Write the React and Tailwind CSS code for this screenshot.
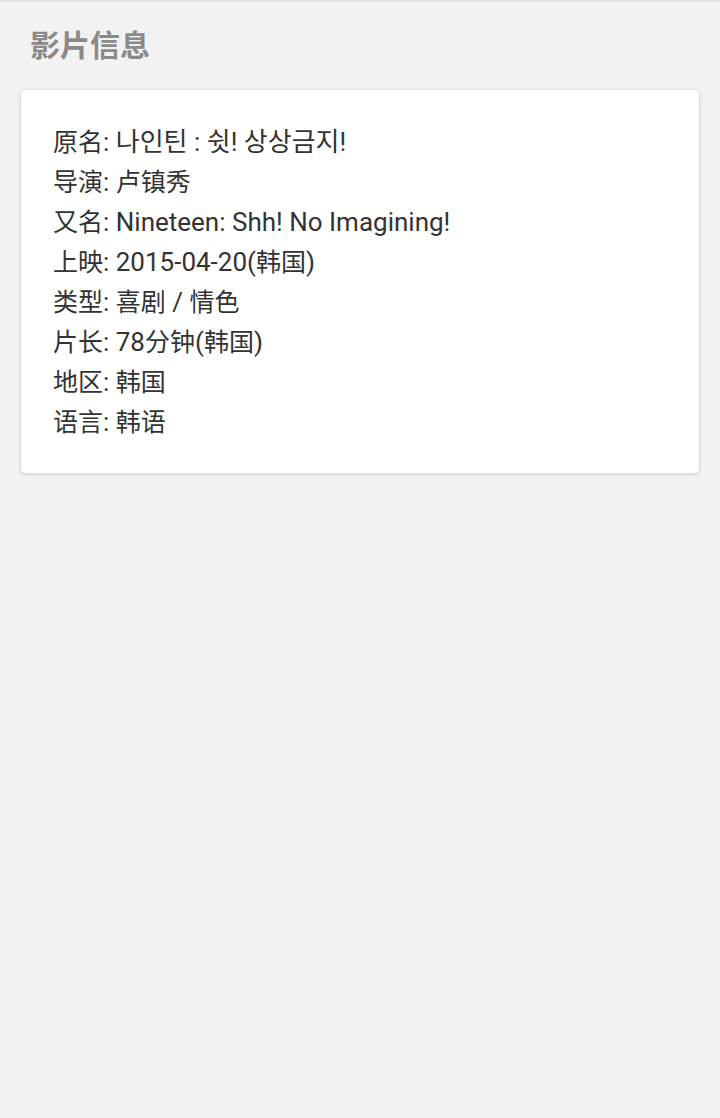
const HAN = /([\u3400-\u9fff]+)/;

function Mixed({ text }) {
  return text.split(HAN).map((part, i) =>
    HAN.test(part) ? (
      <span key={i} className="text-[25px] leading-none">
        {part}
      </span>
    ) : (
      <span key={i} className="leading-none">{part}</span>
    )
  );
}

export default function App() {
  const rows = [
    ["原名", "나인틴 : 쉿! 상상금지!"],
    ["导演", "卢镇秀"],
    ["又名", "Nineteen: Shh! No Imagining!"],
    ["上映", "2015-04-20(韩国)"],
    ["类型", "喜剧 / 情色"],
    ["片长", "78分钟(韩国)"],
    ["地区", "韩国"],
    ["语言", "韩语"],
  ];
  return (
    <div
      className="min-h-[1118px] bg-[#f2f2f2] border-t-2 border-[#e2e2e2]"
      style={{ fontFamily: 'Roboto, "Noto Sans CJK SC", "Noto Sans CJK KR", sans-serif' }}
    >
      <div className="px-[30px] pt-[24px] pb-[23px] text-[30px] leading-[40px] font-bold text-[#8a8a8a]">
        影片信息
      </div>
      <div className="mx-[20px] bg-white rounded-[6px] border border-[#e0e0e0] shadow-[0_1px_3px_rgba(0,0,0,0.12)] pl-[32px] pr-[20px] pt-[32px] pb-[31px]">
        {rows.map(([k, v]) => (
          <div key={k} className="h-[40px] text-[26px] leading-[40px] text-[#333333] whitespace-nowrap">
            <Mixed text={`${k}: ${v}`} />
          </div>
        ))}
      </div>
    </div>
  );
}
